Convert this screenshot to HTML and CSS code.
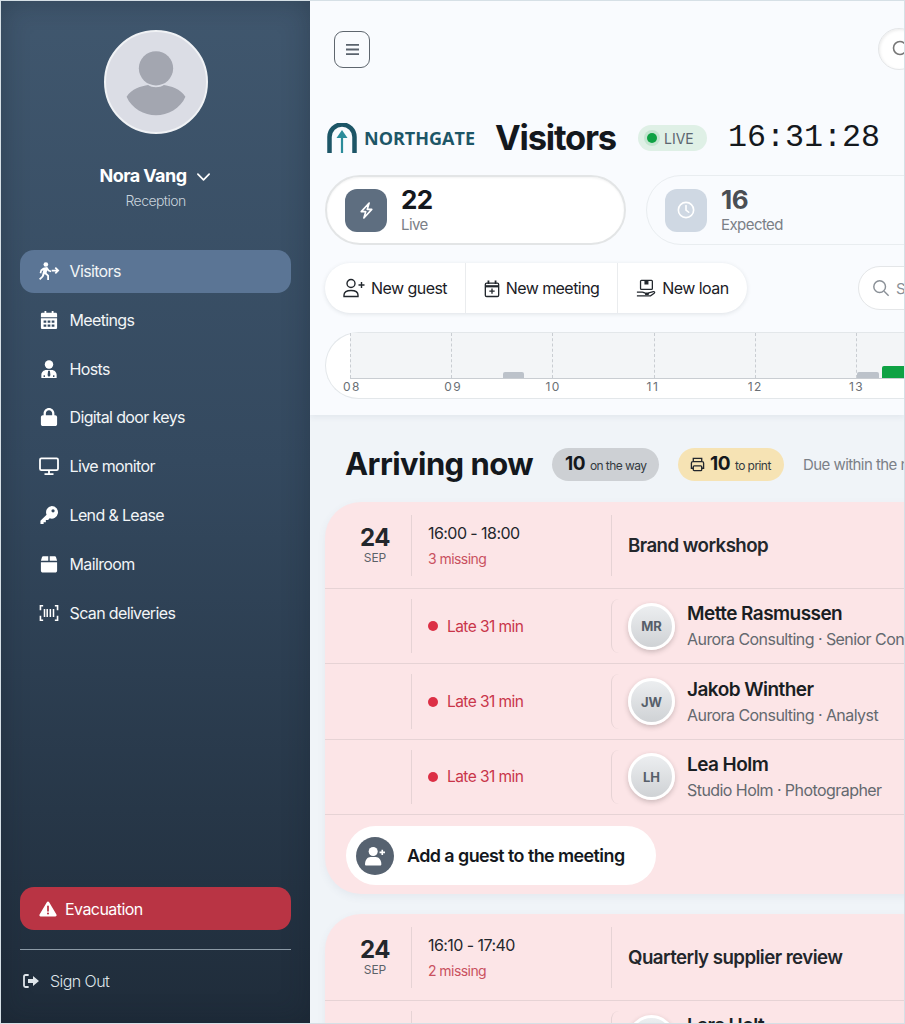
FILE: index.html
```html
<!DOCTYPE html>
<html lang="en">
<head>
  <meta charset="UTF-8">
  <meta name="viewport" content="width=device-width, initial-scale=1.0">
  <title>Visitors</title>
  <link rel="stylesheet" href="styles.css">
</head>
<body>
  <div class="app">
    <!-- Sidebar -->
    <aside class="sidebar">
      <div class="profile">
        <div class="profile-photo">
          <svg viewBox="0 0 100 100" width="98" height="98"><circle cx="50" cy="36" r="17.500" fill="#a3a6b0"/><path d="M20 65c5-8 15-11 22-12 4 3 12 3 16 0 7 1 17 4 22 12-5 12-18 19-30 19s-25-7-30-19z" fill="#a3a6b0"/></svg>
        </div>
        <div class="profile-name">Nora Vang
          <svg viewBox="0 0 16 10" width="15" height="10" fill="none" stroke="#fff" stroke-width="1.800" stroke-linecap="round" stroke-linejoin="round"><path d="M2 2l6 6 6-6"/></svg>
        </div>
        <div class="profile-role">Reception</div>
      </div>

      <nav class="nav">
        <a class="nav-item active">
          <svg class="nav-icon" viewBox="0 0 24 20" fill="#fff"><circle cx="8.500" cy="2.800" r="2.600"/><path d="M5.500 6.300l4.500-.8 2.400 3.500 2.200.8-.6 1.700-3-1.100-1-1.300-.7 3 2.700 2.500V20h-2v-4.500l-2.800-2.300-1.300 3.300-3.600 3.500-1.400-1.400 3.200-3 1.600-6.300-1.500.8-.8 2.700-1.800-.5 1-3.800z"/><path d="M15 9.500h7M19 6.300l3.200 3.200-3.200 3.200" fill="none" stroke="#fff" stroke-width="1.900"/></svg>
          Visitors
        </a>
        <a class="nav-item">
          <svg class="nav-icon" viewBox="0 0 24 20" fill="#fff"><path fill-rule="evenodd" d="M7 0h2v2h6V0h2v2h2.500c.8 0 1.500.7 1.500 1.500V7H3V3.500C3 2.700 3.700 2 4.500 2H7zM3 8h18v10.500c0 .8-.7 1.500-1.500 1.500h-15C3.700 20 3 19.300 3 18.500zm3 2.500V13h3v-2.500zm4.500 0V13h3v-2.500zm4.500 0V13h3v-2.500zM6 15v2.500h3V15zm4.500 0v2.500h3V15zm4.500 0v2.500h3V15z"/></svg>
          Meetings
        </a>
        <a class="nav-item">
          <svg class="nav-icon" viewBox="0 0 24 20" fill="#fff"><circle cx="12" cy="5" r="4.700"/><path fill-rule="evenodd" d="M9 11h6c3 0 5.500 2.500 5.500 5.500V20h-17v-3.500C3.500 13.500 6 11 9 11zm2 1l-.6 5 1.600 2 1.600-2-.6-5zM6 17v2h1.500v-2zm10.500 0v2H18v-2z"/></svg>
          Hosts
        </a>
        <a class="nav-item">
          <svg class="nav-icon" viewBox="0 0 24 20" fill="#fff"><path fill-rule="evenodd" d="M12 0c3.300 0 6 2.700 6 6v2h1c1 0 2 1 2 2v8c0 1-1 2-2 2H5c-1 0-2-1-2-2v-8c0-1 1-2 2-2h1V6c0-3.300 2.700-6 6-6zm0 2.500C10 2.500 8.500 4 8.500 6v2h7V6c0-2-1.500-3.500-3.500-3.500z"/></svg>
          Digital door keys
        </a>
        <a class="nav-item">
          <svg class="nav-icon" viewBox="0 0 24 20" fill="none" stroke="#fff" stroke-width="2"><rect x="2" y="1.500" width="20" height="13" rx="1.500"/><path d="M12 15v3M7 19h10"/></svg>
          Live monitor
        </a>
        <a class="nav-item">
          <svg class="nav-icon" viewBox="0 0 24 20" fill="#fff"><path fill-rule="evenodd" d="M15 0a7 7 0 1 1-2.300 13.600L11 15.500H8.500V18H6v2H2.500v-3.500L9.300 9.700A7 7 0 0 1 15 0zm1.500 3.500a1.800 1.800 0 1 0 0 3.600 1.800 1.800 0 0 0 0-3.600z"/></svg>
          Lend &amp; Lease
        </a>
        <a class="nav-item">
          <svg class="nav-icon" viewBox="0 0 24 20" fill="#fff"><path d="M6 1.500h5.200v5H3l1-3.500c.3-1 1-1.500 2-1.500zM12.800 1.500H18c1 0 1.700.5 2 1.500l1 3.500h-8.200zM3 8h18v9.500c0 1-1 2-2 2H5c-1 0-2-1-2-2z"/></svg>
          Mailroom
        </a>
        <a class="nav-item">
          <svg class="nav-icon" viewBox="0 0 24 20" fill="none" stroke="#fff" stroke-width="1.800"><path d="M5.500 2H2.500v5M18.500 2h3v5M5.500 18H2.500v-5M18.500 18h3v-5"/><path d="M7 5.500v9M10 5.500v9M13.500 5.500v9M17 5.500v9" stroke-width="1.700"/></svg>
          Scan deliveries
        </a>
      </nav>

      <a class="evac">
        <svg viewBox="0 0 20 18" width="18" height="16"><path d="M10 .5c.6 0 1 .3 1.300.8l8.200 14c.6 1-.1 2.200-1.300 2.200H1.800C.6 17.500-.1 16.300.5 15.300l8.200-14C9 .8 9.400.5 10 .5z" fill="#fff"/><path d="M10 6v5" stroke="#b93444" stroke-width="2" stroke-linecap="round"/><circle cx="10" cy="14" r="1.200" fill="#b93444"/></svg>
        Evacuation
      </a>
      <a class="signout">
        <svg viewBox="0 0 18 16" width="18" height="16" fill="none"><path d="M6 2H3.500C2.500 2 2 2.500 2 3.500v9c0 1 .5 1.500 1.500 1.500H6" stroke="#dfe5ea" stroke-width="1.800" stroke-linecap="round"/><path d="M11 3l6 5-6 5v-3H6V6h5z" fill="#dfe5ea"/></svg>
        Sign Out
      </a>
    </aside>

    <main class="main">
      <!-- Top part -->
      <section class="top">
        <div class="topbar">
          <button class="menu-button">
            <svg viewBox="0 0 16 14" width="15" height="13" fill="none" stroke="#5a636d" stroke-width="2"><path d="M1 2h14M1 7h14M1 12h14"/></svg>
          </button>
          <div class="round-search">
            <svg viewBox="0 0 20 20" width="20" height="20" fill="none" stroke="#777" stroke-width="1.600"><circle cx="9" cy="9" r="6.500"/><path d="M14 14l5 5"/></svg>
          </div>
        </div>

        <div class="title-row">
          <div class="logo">
            <svg viewBox="0 0 30 30" width="30" height="30" fill="none"><path d="M2.500 30V14a12.500 12.500 0 0 1 25 0v16" stroke="#1d5667" stroke-width="4.500"/><path d="M15 30V13" stroke="#2b8c9a" stroke-width="2.200"/><path d="M15 7l5.500 8h-11z" fill="#2b8c9a"/></svg>
            <span class="logo-text">NORTHGATE</span>
          </div>
          <h1 class="page-title">Visitors</h1>
          <div class="live-pill"><span class="live-dot"></span>LIVE</div>
          <div class="clock">16:31:28</div>
        </div>

        <div class="stat-row">
          <div class="stat-card selected">
            <div class="stat-icon">
              <svg viewBox="0 0 20 24" width="15" height="19" fill="none" stroke="#fff" stroke-width="2.200" stroke-linejoin="round"><path d="M13.500 2L3 13.500h6L6.500 22 17 10.500h-6z"/></svg>
            </div>
            <div>
              <div class="stat-number">22</div>
              <div class="stat-label">Live</div>
            </div>
          </div>
          <div class="stat-card">
            <div class="stat-icon pale">
              <svg viewBox="0 0 20 20" width="18" height="18" fill="none" stroke="#fff" stroke-width="1.800" stroke-linecap="round"><circle cx="10" cy="10" r="8.500"/><path d="M10 5v5l3 2.500"/></svg>
            </div>
            <div class="faded">
              <div class="stat-number">16</div>
              <div class="stat-label">Expected</div>
            </div>
          </div>
        </div>

        <div class="action-row">
          <div class="actions">
            <a class="action">
              <svg viewBox="0 0 22 20" width="22" height="20" fill="none" stroke="#22272d" stroke-width="1.400"><circle cx="8" cy="5.500" r="4"/><path d="M1 18.500v-1.500c0-3 2.500-4.500 7-4.500s7 1.500 7 4.500v1.500zM15.500 7h6M18.500 4v6"/></svg>
              New guest
            </a>
            <a class="action">
              <svg viewBox="0 0 18 20" width="16" height="19" fill="none" stroke="#22272d" stroke-width="1.500"><rect x="1.500" y="4" width="15" height="15" rx="1.500"/><path d="M1.500 7.500h15" stroke-width="2.500"/><path d="M5 1v4M13 1v4" stroke-width="2"/><path d="M9 10v6M6 13h6"/></svg>
              New meeting
            </a>
            <a class="action">
              <svg viewBox="0 0 22 20" width="20" height="19" fill="none" stroke="#22272d" stroke-width="1.400"><rect x="5" y="1" width="13" height="10" rx="1"/><path d="M10 1v4h3V1" fill="#22272d"/><path d="M1 14h6c1.500 0 2 1 3 1h3c1 0 1 1.500 0 1.500h-3M13 15l6-1.500c1.500-.3 2 1 1 1.800l-4 2.700H1"/></svg>
              New loan
            </a>
          </div>
          <div class="search-box">
            <svg viewBox="0 0 20 20" width="18" height="18" fill="none" stroke="#8a9097" stroke-width="1.600"><circle cx="8.500" cy="8.500" r="6.500"/><path d="M13.500 13.500l5 5"/></svg>
            Search
          </div>
        </div>

        <div class="timeline">
          <div class="plot">
            <div class="hour"></div><div class="hour"></div><div class="hour"></div><div class="hour"></div><div class="hour"></div><div class="hour"></div>
            <span class="bar" style="left: 153px; width: 21px;"></span>
            <span class="bar" style="left: 507px; width: 22px;"></span>
            <span class="bar on" style="left: 532px; width: 24px;"></span>
          </div>
          <div class="hour-labels">
            <span>08</span><span>09</span><span>10</span><span>11</span><span>12</span><span>13</span>
          </div>
        </div>
      </section>

      <!-- Arriving list -->
      <section class="arrivals">
        <div class="arrivals-head">
          <h2>Arriving now</h2>
          <div class="count-pill grey"><b>10</b> on the way</div>
          <div class="count-pill yellow">
            <svg viewBox="0 0 16 16" width="15" height="15" fill="none" stroke="#22272d" stroke-width="1.400"><path d="M3.500 5V1.500h9V5M3.500 12H1.500V6.500c0-1 .5-1.500 1.500-1.500h10c1 0 1.500.5 1.500 1.500V12h-2"/><rect x="3.500" y="9.500" width="9" height="5" rx="1"/></svg>
            <b>10</b> to print
          </div>
          <div class="due-text">Due within the next 30 minutes</div>
        </div>

        <div class="meeting">
          <div class="row head-row">
            <div class="date"><b>24</b><span>SEP</span></div>
            <div class="cell">
              <div class="time">16:00 - 18:00</div>
              <div class="missing">3 missing</div>
            </div>
            <div class="cell meeting-title">Brand workshop</div>
          </div>
          <div class="row guest-row">
            <div class="date"></div>
            <div class="cell status"><span class="late-dot"></span>Late 31 min</div>
            <div class="cell guest">
              <div class="avatar">MR</div>
              <div>
                <div class="guest-name">Mette Rasmussen</div>
                <div class="guest-info">Aurora Consulting · Senior Consultant</div>
              </div>
            </div>
          </div>
          <div class="row guest-row">
            <div class="date"></div>
            <div class="cell status"><span class="late-dot"></span>Late 31 min</div>
            <div class="cell guest">
              <div class="avatar">JW</div>
              <div>
                <div class="guest-name">Jakob Winther</div>
                <div class="guest-info">Aurora Consulting · Analyst</div>
              </div>
            </div>
          </div>
          <div class="row guest-row">
            <div class="date"></div>
            <div class="cell status"><span class="late-dot"></span>Late 31 min</div>
            <div class="cell guest">
              <div class="avatar">LH</div>
              <div>
                <div class="guest-name">Lea Holm</div>
                <div class="guest-info">Studio Holm · Photographer</div>
              </div>
            </div>
          </div>
          <div class="add-row">
            <a class="add-guest">
              <span class="add-icon">
                <svg viewBox="0 0 24 22" width="22" height="20" fill="#fff"><circle cx="10" cy="6" r="5"/><path d="M1 20c0-5 3-8 6-8h6c3 0 6 3 6 8 0 1-.5 1.500-1.500 1.500h-15C1.500 21.500 1 21 1 20z"/><path d="M20 4v6M17 7h6" stroke="#fff" stroke-width="1.800"/></svg>
              </span>
              Add a guest to the meeting
            </a>
          </div>
        </div>

        <div class="meeting">
          <div class="row head-row">
            <div class="date"><b>24</b><span>SEP</span></div>
            <div class="cell">
              <div class="time">16:10 - 17:40</div>
              <div class="missing">2 missing</div>
            </div>
            <div class="cell meeting-title">Quarterly supplier review</div>
          </div>
          <div class="row guest-row">
            <div class="date"></div>
            <div class="cell status"><span class="late-dot"></span>Late 21 min</div>
            <div class="cell guest">
              <div class="avatar">LH</div>
              <div>
                <div class="guest-name">Lars Holt</div>
                <div class="guest-info">Holt Supply · Buyer</div>
              </div>
            </div>
          </div>
        </div>
      </section>
    </main>
  </div>
</body>
</html>
```

FILE: styles.css
```css
* {
  box-sizing: border-box;
}
body {
  margin: 0;
  font-family: 'Inter', sans-serif;
  letter-spacing: -0.035em;
  color: #14181d;
}
.app {
  display: flex;
  width: 905px;
  height: 1024px;
  overflow: hidden;
  border: 1px solid #d6e0e6;
  background-color: #f0f4f8;
}

/* Sidebar */
.sidebar {
  flex: none;
  display: flex;
  flex-direction: column;
  width: 309px;
  padding: 29px 19px 0;
  background: linear-gradient(180deg, #40576e 0%, #34495f 45%, #1f2c3a 100%);
  box-shadow: inset 0 0 28px rgba(18, 28, 38, 0.3);
}
.profile {
  display: flex;
  flex-direction: column;
  align-items: center;
}
.profile-photo {
  display: flex;
  align-items: center;
  justify-content: center;
  width: 104px;
  height: 104px;
  border: 2px solid #f0f2f5;
  border-radius: 50%;
  background-color: #dbdde5;
}
.profile-name {
  display: flex;
  align-items: center;
  gap: 10px;
  margin-top: 30px;
  color: white;
  font-size: 18px;
  font-weight: 700;
  line-height: 24px;
}
.profile-name svg {
  margin-top: 2px;
}
.profile-role {
  margin-top: 3px;
  color: #c9d3dc;
  font-size: 14px;
  font-weight: 300;
  line-height: 20px;
}
.nav {
  display: flex;
  flex-direction: column;
  gap: 5.8px;
  margin-top: 38.5px;
}
.nav-item {
  display: flex;
  align-items: center;
  gap: 9.5px;
  height: 43px;
  padding-left: 18px;
  border-radius: 14px;
  color: #f2f5f7;
  font-size: 16px;
  font-weight: 400;
  letter-spacing: -0.04em;
}
.nav-item.active {
  background-color: #5b7595;
}
.nav-icon {
  width: 22px;
  height: 18px;
}
.evac {
  display: flex;
  align-items: center;
  gap: 8px;
  height: 43px;
  margin-top: auto;
  padding-left: 19px;
  border-radius: 14px;
  background-color: #b93444;
  color: white;
  font-size: 16px;
}
.signout {
  display: flex;
  align-items: center;
  gap: 10px;
  height: 74px;
  margin-top: 19px;
  padding: 0 0 11px 2px;
  border-top: 1px solid #8c9aa6;
  color: #dfe5ea;
  font-size: 16px;
  font-weight: 300;
}

/* Main */
.main {
  flex: 1;
  min-width: 0;
  overflow: hidden;
}
.top {
  height: 414px;
  padding: 27px 0 0 15px;
  background-color: #f9fbfe;
  box-shadow: 0 2px 6px rgba(60, 80, 100, 0.08);
}
.topbar {
  display: flex;
  align-items: center;
  justify-content: space-between;
  width: 595px;
}
.menu-button {
  display: flex;
  align-items: center;
  justify-content: center;
  width: 36px;
  height: 37px;
  margin-left: 9px;
  border: 1px solid #5e666e;
  border-radius: 9px;
  background: transparent;
}
.round-search {
  display: flex;
  align-items: center;
  width: 42px;
  height: 42px;
  padding-left: 12px;
  border: 1px solid #e4e6e8;
  border-radius: 50%;
  background-color: white;
  box-shadow: inset 1px 1px 3px rgba(0, 0, 0, 0.08);
}
.title-row {
  display: flex;
  align-items: center;
  height: 44px;
  margin-top: 46px;
}
.logo {
  display: flex;
  align-items: center;
  gap: 7px;
  width: 170px;
  padding-left: 2px;
}
.logo-text {
  color: #1d5667;
  font-family: 'Open Sans', sans-serif;
  font-size: 18px;
  font-weight: 700;
  letter-spacing: 0;
}
.page-title {
  width: 143px;
  margin: 0;
  font-size: 34.5px;
  font-weight: 700;
  line-height: 44px;
  letter-spacing: -0.035em;
}
.live-pill {
  display: flex;
  align-items: center;
  gap: 7px;
  width: 69px;
  height: 26px;
  padding-left: 9px;
  border-radius: 13px;
  background-color: #dff0e6;
  color: #5c6670;
  font-size: 14px;
  letter-spacing: 0;
}
.live-dot {
  width: 10px;
  height: 10px;
  border-radius: 50%;
  background-color: #0ea244;
  box-shadow: 0 0 0 3px #c4e5d0;
}
.clock {
  margin-left: 21px;
  font-family: 'Liberation Mono', monospace;
  font-size: 31.7px;
  letter-spacing: 0;
  color: #14181d;
}
.stat-row {
  display: flex;
  gap: 20px;
  margin-top: 15px;
  width: 800px;
}
.stat-card {
  flex: none;
  display: flex;
  align-items: center;
  gap: 14px;
  width: 301px;
  height: 70px;
  padding-left: 18px;
  border: 1px solid #e9edf0;
  border-radius: 35px;
}
.stat-card.selected {
  border: 2px solid #e3e5e6;
  background-color: white;
  box-shadow: inset 0 1px 2px rgba(0, 0, 0, 0.05);
}
.stat-icon {
  display: flex;
  align-items: center;
  justify-content: center;
  width: 42px;
  height: 43px;
  border-radius: 12px;
  background-color: #5e6e80;
}
.stat-icon.pale {
  background-color: #cfd8e3;
}
.stat-number {
  font-size: 26px;
  font-weight: 700;
  line-height: 28px;
}
.stat-label {
  margin-top: 2px;
  color: #7b8087;
  font-size: 15px;
  font-weight: 400;
  line-height: 18px;
}
.faded .stat-number {
  color: #4a4e54;
}
.action-row {
  display: flex;
  align-items: center;
  gap: 111px;
  margin-top: 18px;
  width: 800px;
}
.actions {
  flex: none;
  display: flex;
  width: 422px;
  height: 50px;
  border-radius: 25px;
  background-color: white;
  box-shadow: 0 1px 4px rgba(50, 60, 70, 0.13);
}
.action {
  display: flex;
  align-items: center;
  justify-content: center;
  gap: 6px;
  border-left: 1px solid #eaecee;
  color: #1b2026;
  font-size: 16px;
  font-weight: 400;
}
.action:nth-child(1) {
  width: 140px;
  border-left: none;
}
.action:nth-child(2) {
  width: 152px;
}
.action:nth-child(3) {
  width: 130px;
}
.search-box {
  flex: none;
  display: flex;
  align-items: center;
  gap: 6px;
  width: 200px;
  height: 44px;
  padding-left: 13px;
  border: 1px solid #e4e6e8;
  border-radius: 22px;
  background-color: white;
  color: #8a9097;
  font-size: 15px;
}
.timeline {
  width: 700px;
  height: 67px;
  margin-top: 19px;
  padding-left: 24px;
  border: 1px solid #e3e7ea;
  border-right: none;
  border-radius: 35px 0 0 35px;
  background-color: white;
}
.plot {
  position: relative;
  display: flex;
  height: 46px;
  background-color: #f3f5f7;
  border-bottom: 1px solid #c9cdd2;
}
.hour {
  flex: none;
  width: 101.2px;
  border-left: 1px dashed #c9cdd2;
}
.bar {
  position: absolute;
  bottom: 0;
  height: 6px;
  border-radius: 2px 2px 0 0;
  background-color: #bcc2ca;
}
.bar.on {
  height: 12px;
  background-color: #0ea244;
}
.hour-labels {
  display: flex;
}
.hour-labels span {
  flex: none;
  width: 101.2px;
  margin-left: -7px;
  margin-right: 7px;
  color: #6a6f75;
  font-size: 12px;
  letter-spacing: 0.12em;
  line-height: 16px;
}

/* Arrivals */
.arrivals {
  padding: 32px 0 0 15px;
}
.arrivals-head {
  display: flex;
  align-items: center;
  height: 34px;
  width: 800px;
}
.arrivals-head h2 {
  flex: none;
  width: 207px;
  margin: 0 0 0 20px;
  font-size: 31px;
  font-weight: 700;
  line-height: 34px;
}
.count-pill {
  flex: none;
  display: flex;
  align-items: baseline;
  gap: 5px;
  height: 33px;
  padding-top: 4px;
  border-radius: 17px;
  color: #343a41;
  font-size: 12px;
}
.count-pill b {
  color: #14181d;
  font-size: 19px;
  font-weight: 700;
}
.count-pill.grey {
  width: 107px;
  padding-left: 13px;
  background-color: #cdd0d4;
}
.count-pill.yellow {
  width: 106px;
  margin-left: 19px;
  padding-left: 12px;
  background-color: #f6e3b4;
}
.count-pill svg {
  align-self: center;
  margin: -4px 0 0 0;
}
.due-text {
  flex: none;
  margin-left: 19px;
  color: #7b8087;
  font-size: 15px;
}
.meeting {
  width: 800px;
  margin-top: 20px;
  border-radius: 36px 0 0 36px;
  background-color: #fce5e7;
  box-shadow: 0 3px 8px rgba(70, 90, 110, 0.07);
}
.arrivals-head + .meeting {
  margin-top: 21px;
}
.row {
  display: grid;
  grid-template-columns: 86px 200px 1fr;
  border-bottom: 1px solid #e6d3d5;
}
.head-row {
  height: 87px;
  padding: 13px 0 12px;
}
.guest-row {
  height: 75.4px;
  padding: 10px 0 10px;
}
.date {
  display: flex;
  flex-direction: column;
  align-items: center;
  justify-content: center;
  padding-left: 14px;
}
.date b {
  font-size: 24px;
  font-weight: 700;
  line-height: 24px;
  color: #23272c;
}
.date span {
  color: #5c6268;
  font-size: 12px;
  letter-spacing: 0;
  line-height: 15px;
}
.cell {
  display: flex;
  flex-direction: column;
  justify-content: center;
  padding-left: 16px;
  border-left: 1px solid #e6d3d5;
}
.time {
  color: #23272c;
  font-size: 16px;
  line-height: 22px;
}
.missing {
  margin-top: 5px;
  color: #c9515f;
  font-size: 14px;
  line-height: 20px;
}
.meeting-title {
  color: #23272c;
  font-size: 18.7px;
  font-weight: 600;
}
.status {
  flex-direction: row;
  align-items: center;
  justify-content: flex-start;
  gap: 9px;
  color: #c9354a;
  font-size: 15.5px;
}
.late-dot {
  width: 10px;
  height: 10px;
  border-radius: 50%;
  background-color: #dc2f45;
}
.guest {
  flex-direction: row;
  align-items: center;
  justify-content: flex-start;
  gap: 12px;
  border-radius: 8px 0 0 8px;
}
.avatar {
  flex: none;
  display: flex;
  align-items: center;
  justify-content: center;
  width: 47px;
  height: 47px;
  border: 3px solid white;
  border-radius: 50%;
  background: linear-gradient(180deg, #eceef0, #cfd2d5);
  box-shadow: 0 2px 5px rgba(60, 50, 50, 0.25);
  color: #565f6a;
  font-size: 13px;
  font-weight: 700;
  letter-spacing: 0;
}
.guest-name {
  color: #1a1e23;
  font-size: 19px;
  font-weight: 600;
  line-height: 24px;
}
.guest-info {
  margin-top: 2px;
  color: #64696f;
  font-size: 16px;
  white-space: nowrap;
  line-height: 22px;
}
.add-row {
  height: 79px;
  padding: 11px 0 0 21px;
}
.add-guest {
  display: flex;
  align-items: center;
  gap: 13px;
  width: 310px;
  height: 59px;
  padding-left: 10px;
  border-radius: 30px;
  background-color: white;
  color: #14181d;
  font-size: 17.9px;
  font-weight: 600;
}
.add-icon {
  display: flex;
  align-items: center;
  justify-content: center;
  width: 38px;
  height: 38px;
  border-radius: 50%;
  background-color: #566270;
}
```
